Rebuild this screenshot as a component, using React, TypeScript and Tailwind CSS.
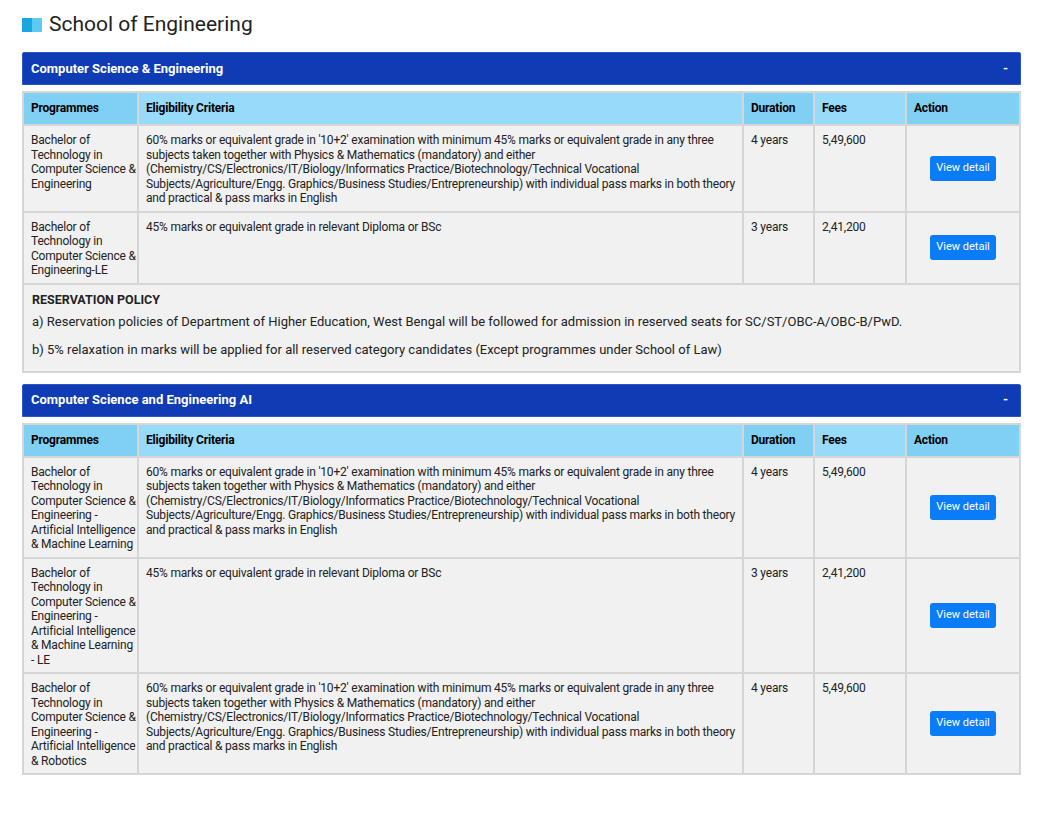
import React from "react";

const long = "60% marks or equivalent grade in '10+2' examination with minimum 45% marks or equivalent grade in any three subjects taken together with Physics & Mathematics (mandatory) and either (Chemistry/CS/Electronics/IT/Biology/Informatics Practice/Biotechnology/Technical Vocational Subjects/Agriculture/Engg. Graphics/Business Studies/Entrepreneurship) with individual pass marks in both theory and practical & pass marks in English";
const short = "45% marks or equivalent grade in relevant Diploma or BSc";

type Row = { p: string; e: string; d: string; f: string };

function Table({ rows }: { rows: Row[] }) {
  const th = "text-left font-bold text-black pl-[7px] pr-0 h-[33px] border-2 border-[#d6d6d6]";
  const td = "align-top pl-[7px] pr-0 pt-[7px] pb-[5px] border-2 border-[#d6d6d6]";
  return (
    <table className="w-full border-collapse text-[12px] leading-[14.5px] text-[#222] table-fixed tracking-[-0.2px]">
      <colgroup>
        <col style={{ width: 115 }} />
        <col />
        <col style={{ width: 71 }} />
        <col style={{ width: 92 }} />
        <col style={{ width: 114 }} />
      </colgroup>
      <thead>
        <tr>
          <th className={th + " bg-[#7fd0f3]"}>Programmes</th>
          <th className={th + " bg-[#97dafa]"}>Eligibility Criteria</th>
          <th className={th + " bg-[#7fd0f3]"}>Duration</th>
          <th className={th + " bg-[#97dafa]"}>Fees</th>
          <th className={th + " bg-[#7fd0f3]"}>Action</th>
        </tr>
      </thead>
      <tbody className="bg-[#f1f1f1]">
        {rows.map((r, i) => (
          <tr key={i}>
            <td className={td}>{r.p}</td>
            <td className={td}>{r.e}</td>
            <td className={td}>{r.d}</td>
            <td className={td}>{r.f}</td>
            <td className="border-2 border-[#d6d6d6] align-middle text-center">
              <button className="bg-[#0a7cf7] text-white text-[11px] rounded-[3px] w-[66px] h-[25px] tracking-normal">View detail</button>
            </td>
          </tr>
        ))}
      </tbody>
    </table>
  );
}

function Panel({ title, rows, policy }: { title: string; rows: Row[]; policy?: boolean }) {
  return (
    <div className="mb-[11px]">
      <div className="bg-[#0f3bb5] rounded-t-[2px] h-[33px] flex items-center justify-between px-2 text-white font-bold text-[13px] border border-[#2a56c8]">
        <span>{title}</span>
        <span className="pr-1">-</span>
      </div>
      <div className="mt-[6px]">
        <Table rows={rows} />
        {policy && (
          <div className="bg-[#f1f1f1] border-2 border-t-0 border-[#d6d6d6] px-2 pt-[6px] pb-[12px] text-[13px] leading-[18px] text-[#222]">
            <div className="font-bold text-[12.5px] mb-[4px]">RESERVATION POLICY</div>
            <p className="mb-[10px]">a) Reservation policies of Department of Higher Education, West Bengal will be followed for admission in reserved seats for SC/ST/OBC-A/OBC-B/PwD.</p>
            <p>b) 5% relaxation in marks will be applied for all reserved category candidates (Except programmes under School of Law)</p>
          </div>
        )}
      </div>
    </div>
  );
}

export default function App() {
  return (
    <div className="bg-white min-h-[839px] px-[22px] pt-[10px]" style={{ fontFamily: "Roboto, sans-serif" }}>
      <div className="flex items-center gap-[7px] mb-[12px] h-[30px]">
        <div className="flex">
          <div className="w-[10px] h-[14px] bg-[#1aa6e0]" />
          <div className="w-[10px] h-[14px] bg-[#5ccaf5]" />
        </div>
        <h1 className="text-[21px] text-[#222]">School of Engineering</h1>
      </div>
      <Panel
        title="Computer Science & Engineering"
        policy
        rows={[
          { p: "Bachelor of Technology in Computer Science & Engineering", e: long, d: "4 years", f: "5,49,600" },
          { p: "Bachelor of Technology in Computer Science & Engineering-LE", e: short, d: "3 years", f: "2,41,200" },
        ]}
      />
      <Panel
        title="Computer Science and Engineering AI"
        rows={[
          { p: "Bachelor of Technology in Computer Science & Engineering - Artificial Intelligence & Machine Learning", e: long, d: "4 years", f: "5,49,600" },
          { p: "Bachelor of Technology in Computer Science & Engineering - Artificial Intelligence & Machine Learning - LE", e: short, d: "3 years", f: "2,41,200" },
          { p: "Bachelor of Technology in Computer Science & Engineering - Artificial Intelligence & Robotics", e: long, d: "4 years", f: "5,49,600" },
        ]}
      />
    </div>
  );
}
